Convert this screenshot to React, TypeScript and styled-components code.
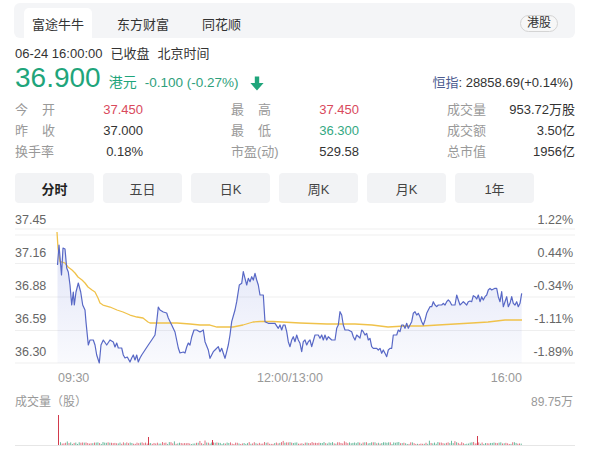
import React from "react";
import styled, { createGlobalStyle } from "styled-components";

const GlobalStyle = createGlobalStyle`
  html, body { margin: 0; padding: 0; background: #fff; }
  body { font-family: "Liberation Sans", "Noto Sans CJK SC", Arial, sans-serif; color: #333; }
  * { box-sizing: border-box; }
`;

const Page = styled.div`
  width: 606px;
  height: 452px;
  overflow: hidden;
  padding: 3px 31px 0 15px;
`;

const TopBar = styled.div`
  display: flex;
  align-items: flex-end;
  gap: 17px;
  height: 35px;
  margin-left: -1px;
  padding: 0 17px 0 10px;
  background: #f4f5f7;
  border-radius: 6px;
`;

const SourceTab = styled.div<{ $active?: boolean }>`
  display: flex;
  align-items: center;
  height: 30px;
  padding: 0 8px;
  font-size: 13px;
  color: #333;
  background: ${(p) => (p.$active ? "#fff" : "transparent")};
  border-radius: 5px 5px 0 0;
`;

const MarketBadge = styled.span`
  margin-left: auto;
  margin-bottom: 6px;
  height: 17px;
  padding: 0 6px;
  border: 1px solid #d4d4d4;
  border-radius: 9px;
  background: #f7f7f7;
  font-size: 12px;
  line-height: 15px;
  color: #333;
`;

const TimeLine = styled.div`
  display: flex;
  gap: 8px;
  margin-top: 8px;
  font-size: 13px;
  line-height: 16px;
  color: #333;
`;

const PriceRow = styled.div`
  display: flex;
  align-items: baseline;
  height: 32px;
`;

const Price = styled.span`
  font-size: 28px;
  line-height: 32px;
  color: #1fa57b;
`;

const Currency = styled.span`
  margin-left: 8px;
  font-size: 14px;
  color: #1fa57b;
`;

const Change = styled.span`
  margin-left: 8px;
  font-size: 13.5px;
  color: #2f9f7c;
`;

const DownArrow = styled.svg`
  align-self: flex-end;
  margin: 0 0 3px 12px;
  width: 14px;
  height: 15px;
`;

const IndexQuote = styled.span`
  margin-left: auto;
  margin-right: 2px;
  font-size: 13px;
  color: #333;
`;

const IndexName = styled.span`
  color: #4c5b8f;
`;

const Stats = styled.div`
  display: grid;
  grid-template-columns: repeat(3, 128px);
  justify-content: space-between;
  margin-top: 5px;
  font-size: 13px;
  line-height: 21px;
`;

const StatItem = styled.div`
  display: flex;
  justify-content: space-between;
`;

const StatLabel = styled.span<{ $spread?: boolean }>`
  color: #999;
  ${(p) => (p.$spread ? "width: 40px; text-align: justify; text-align-last: justify;" : "")}
`;

const StatValue = styled.span<{ $tone?: "up" | "down" }>`
  color: ${(p) => (p.$tone === "up" ? "#d94a5c" : p.$tone === "down" ? "#33a882" : "#333")};
`;

const Periods = styled.div`
  display: flex;
  gap: 9px;
  margin-top: 11px;
`;

const PeriodButton = styled.button<{ $active?: boolean }>`
  width: 79px;
  height: 30px;
  padding: 0;
  border: 0;
  border-radius: 4px;
  background: #f2f3f5;
  font-family: inherit;
  font-size: 13px;
  font-weight: ${(p) => (p.$active ? 700 : 400)};
  color: ${(p) => (p.$active ? "#222" : "#444")};
`;

const ChartSvg = styled.svg`
  display: block;
  margin-top: 4px;
  width: 560px;
  height: 187px;
  font-family: "Liberation Sans", "Noto Sans CJK SC", Arial, sans-serif;
`;

const VolumeHeader = styled.div`
  display: flex;
  justify-content: space-between;
  padding-right: 2px;
  font-size: 12px;
  line-height: 16px;
  color: #999;
`;

const VolumeSvg = styled.svg`
  display: block;
  width: 560px;
  height: 42px;
`;

const priceLine: number[] = [
  57.5,265, 59,245, 61.5,275, 63,248, 65,249, 66.7,268, 68.3,272, 70,285, 71.7,305, 73.3,292, 74.3,305, 76,292,
  78.3,283, 80.7,292, 82.7,305, 85,310, 86,322, 87.3,335, 88.3,345, 90,340, 93.3,340, 95,345, 96.7,355, 99.3,363,
  101,345, 103.3,340, 106.7,345, 110,340, 113.3,342, 115,347, 116.7,343, 118.3,348, 121.7,348, 123.3,355, 125,358,
  127.3,357, 130,362, 131.7,358, 133.3,355, 135,360, 136.7,355, 138.3,362, 140,358, 141.7,355, 145,350, 148.3,345,
  151.7,340, 155,335, 156.7,322, 158.3,307, 160,310, 163.3,312, 166.7,313, 168.3,318, 171.7,325, 175,332, 178.3,348,
  180,353, 183.3,352, 185,353, 186.7,347, 188.3,343, 190,345, 191.7,337, 194,330, 196.7,330, 200,332, 201.7,331,
  203.3,330, 205,341.7, 208.3,350, 210,358.3, 213.3,351.7, 215,350, 218.3,346.7, 220,351.7, 221.7,348.3, 223.3,353.3,
  225,358.3, 226.7,351.7, 228.3,345, 230,335, 231.7,321.7, 235,310, 236.7,301.7, 239.3,285, 241.7,283.3, 243.3,271.7,
  245,278.3, 246.7,285, 248.3,278.3, 250,281.7, 251.7,276.7, 253.3,280, 255,273.3, 256.7,280, 258.3,285, 260,295,
  263.3,295, 265,321.7, 268.3,323.3, 271.7,323.3, 275,323.3, 278.3,328.3, 280,325, 281.7,330, 283.3,325, 285,325,
  286.7,331.7, 288.3,341.7, 290,346.7, 291.7,340, 293.3,336.7, 295,341.7, 296.7,335, 298.3,340, 300,343.3,
  301.7,351.7, 303.3,341.7, 305,340, 306.7,345, 308.3,341.7, 310,340, 311.7,346.7, 315,335, 318.3,335, 320,338.3,
  321.7,335, 323.3,340, 325,335, 326.7,340, 328.3,336.7, 331.7,340, 335,340, 336.7,328.3, 338.3,325, 340,311.7,
  341.7,315, 343.3,325, 345,330, 348.3,330, 351.7,331.7, 353.3,336.7, 355,340, 356.7,335, 360,338, 361.7,330,
  363.3,331.7, 365,335, 366.7,333.3, 368.3,340, 370,338.3, 371.7,346.7, 373.3,348.3, 376.7,348.3, 378.3,350,
  380,348.3, 381.7,353.3, 383.3,350, 385,353.3, 386.7,356.7, 388.3,350, 390,348.3, 391.7,348.3, 393.3,335, 395,335,
  396.7,335, 398.3,330, 400,331.7, 401.7,325, 403.3,325, 405,328.3, 406.7,323.3, 408.3,328.3, 410,325, 411.7,321.7,
  413.3,313.3, 415,311.7, 416.7,315, 418.3,313.3, 420,316.7, 421.7,321.7, 423.3,325, 425,320, 426.7,313.3, 428.3,310,
  430,306.7, 431.7,306.7, 433.3,301.7, 435,305, 436.7,306.7, 438.3,305, 441.7,305, 443.3,303.3, 445,305, 446.7,301.7,
  448.3,300, 450,301.7, 451.7,305, 455,305, 456.7,295, 458.3,300, 460,305, 461.7,303.3, 463.3,301.7, 465,303.3,
  466.7,305, 468.3,301.7, 470,301, 471.7,301.7, 473.3,295.7, 475,296.7, 476.7,299, 478.3,295, 480,301.7, 481.7,296.7,
  483.3,300, 485,296.7, 486.7,295, 488.3,290, 490,288.3, 491.7,290, 495,288.3, 496.7,288.3, 498.3,296.7, 500,301.7,
  501.7,291.7, 503.3,306.7, 505,301.7, 506.7,296.7, 508.3,306.7, 510,303.3, 511.7,296.7, 513.3,303.3, 515,305,
  516.7,301.7, 518.3,306.7, 520,303.3, 521.7,293.3,
];

const avgLine: number[] = [
  57,232, 58,248, 60,262, 62,262, 65,263, 68,267, 72,270, 75,273, 78,277, 82,280, 85,283, 88,287, 92,290, 95,292,
  98,298, 100,303, 103,305, 110,307, 117,310, 123,312, 130,315, 137,317, 143,318, 148,322, 150,323, 163,323, 177,323,
  190,324, 200,325, 210,325, 217,327, 233,327, 243,325, 253,322, 260,321.5, 273,321.5, 300,323, 327,324, 340,324,
  355,324, 372,325, 388,327, 405,326, 422,326, 438,325, 455,324, 472,323, 488,322, 505,320, 522,320,
];

const toPath = (pts: number[]) => {
  let d = "";
  for (let i = 0; i < pts.length; i += 2) d += `${i === 0 ? "M" : "L"}${pts[i]},${pts[i + 1]} `;
  return d.trim();
};

const linePath = toPath(priceLine);
const areaPath = `${linePath} L${priceLine[priceLine.length - 2]},363 L${priceLine[0]},363 Z`;
const avgPath = toPath(avgLine);

type Bar = { x: number; h: number; c: string };
const volumeBars: Bar[] = (() => {
  const out: Bar[] = [];
  let seed = 11;
  const rnd = () => {
    seed = (seed * 9301 + 49297) % 233280;
    return seed / 233280;
  };
  for (let x = 60; x <= 521; x += 1.7) {
    const r = rnd();
    const h = 1 + rnd() * 2 + (r > 0.95 ? 1.5 : 0);
    out.push({ x, h, c: rnd() > 0.5 ? "#e37583" : "#6dbb9f" });
  }
  out.push({ x: 58, h: 30, c: "#d23a4c" });
  out.push({ x: 148, h: 8, c: "#d23a4c" });
  out.push({ x: 212, h: 5, c: "#d23a4c" });
  out.push({ x: 477, h: 9, c: "#d23a4c" });
  return out;
})();

const gridYs = [229, 235, 263.5, 297, 330.5, 363];
const yLabels = [
  { y: 219, l: "37.45", r: "1.22%" },
  { y: 252, l: "37.16", r: "0.44%" },
  { y: 285, l: "36.88", r: "-0.34%" },
  { y: 318, l: "36.59", r: "-1.11%" },
  { y: 351, l: "36.30", r: "-1.89%" },
];

const periods = ["分时", "五日", "日K", "周K", "月K", "1年"];

const stats: { label: string; spread?: boolean; value: string; tone?: "up" | "down" }[][] = [
  [
    { label: "今开", spread: true, value: "37.450", tone: "up" },
    { label: "最高", spread: true, value: "37.450", tone: "up" },
    { label: "成交量", value: "953.72万股" },
  ],
  [
    { label: "昨收", spread: true, value: "37.000" },
    { label: "最低", spread: true, value: "36.300", tone: "down" },
    { label: "成交额", value: "3.50亿" },
  ],
  [
    { label: "换手率", value: "0.18%" },
    { label: "市盈(动)", value: "529.58" },
    { label: "总市值", value: "1956亿" },
  ],
];

export default function App() {
  return (
    <>
      <GlobalStyle />
      <Page>
        <TopBar>
          <SourceTab $active>富途牛牛</SourceTab>
          <SourceTab>东方财富</SourceTab>
          <SourceTab>同花顺</SourceTab>
          <MarketBadge>港股</MarketBadge>
        </TopBar>

        <TimeLine>
          <span>06-24 16:00:00</span>
          <span>已收盘</span>
          <span>北京时间</span>
        </TimeLine>

        <PriceRow>
          <Price>36.900</Price>
          <Currency>港元</Currency>
          <Change>-0.100 (-0.27%)</Change>
          <DownArrow viewBox="0 0 14 15">
            <path d="M4.8 0.5 H9.2 V7 H13.6 L7 14.6 L0.4 7 H4.8 Z" fill="#1fa57b" />
          </DownArrow>
          <IndexQuote>
            <IndexName>恒指</IndexName>: 28858.69(+0.14%)
          </IndexQuote>
        </PriceRow>

        <Stats>
          {stats.map((row) =>
            row.map((s) => (
              <StatItem key={s.label}>
                <StatLabel $spread={s.spread}>{s.label}</StatLabel>
                <StatValue $tone={s.tone}>{s.value}</StatValue>
              </StatItem>
            ))
          )}
        </Stats>

        <Periods>
          {periods.map((p, i) => (
            <PeriodButton key={p} $active={i === 0}>
              {p}
            </PeriodButton>
          ))}
        </Periods>

        <ChartSvg viewBox="15 207 560 187">
          <defs>
            <linearGradient id="areaFill" x1="0" y1="0" x2="0" y2="1">
              <stop offset="0" stopColor="#6e80d8" stopOpacity="0.2" />
              <stop offset="1" stopColor="#6e80d8" stopOpacity="0.04" />
            </linearGradient>
          </defs>
          {gridYs.map((y) => (
            <line key={y} x1={15} x2={575} y1={y} y2={y} stroke="#efefef" strokeWidth={1} />
          ))}
          <path d={areaPath} fill="url(#areaFill)" />
          <path d={avgPath} fill="none" stroke="#f0c24a" strokeWidth={1.3} strokeLinejoin="round" />
          <path d={linePath} fill="none" stroke="#5868c6" strokeWidth={1.2} strokeLinejoin="round" />
          {yLabels.map((t) => (
            <g key={t.l} fontSize="12.5" fill="#666">
              <text x={15} y={t.y + 4.5}>{t.l}</text>
              <text x={573} y={t.y + 4.5} textAnchor="end">{t.r}</text>
            </g>
          ))}
          <g fontSize="12.5" fill="#999">
            <text x={58} y={381.5}>09:30</text>
            <text x={290} y={381.5} textAnchor="middle">12:00/13:00</text>
            <text x={522} y={381.5} textAnchor="end">16:00</text>
          </g>
        </ChartSvg>

        <VolumeHeader>
          <span>成交量（股）</span>
          <span>89.75万</span>
        </VolumeHeader>

        <VolumeSvg viewBox="15 410 560 42">
          <line x1={15} x2={575} y1={445.5} y2={445.5} stroke="#e6e6e6" strokeWidth={1} />
          {volumeBars.map((b, i) => (
            <rect key={i} x={b.x} y={445 - b.h} width={1} height={b.h} fill={b.c} />
          ))}
        </VolumeSvg>
      </Page>
    </>
  );
}
